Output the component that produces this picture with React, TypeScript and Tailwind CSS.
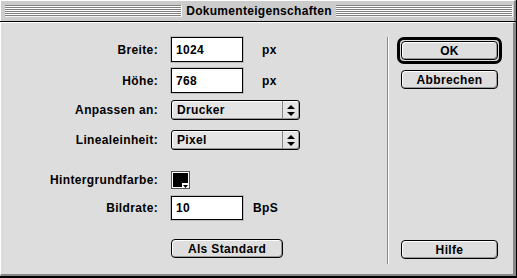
import React from 'react'

const font = "font-['Liberation_Sans',Arial,sans-serif]"

const Stripes = () => (
  <div className="flex-1 h-[12px] bg-[repeating-linear-gradient(to_bottom,#808080_0px,#808080_1px,#ffffff_1px,#ffffff_2px)] border-r border-b border-[#f4f4f4]" />
)

const Label = ({ children }: { children: React.ReactNode }) => (
  <div className="w-[157px] text-right">{children}</div>
)

const TextField = ({ value, width = 'w-[72px]', height = 'h-[25px]' }: { value: string; width?: string; height?: string }) => (
  <div className={`${width} ${height} bg-white border border-black shadow-[0_0_0_1px_#bbbbbb] flex items-center pl-[4px]`}>
    {value}
  </div>
)

const Arrows = () => (
  <svg width="8" height="11" viewBox="0 0 8 11">
    <path d="M4 0 L8 4 L0 4 Z" fill="#000" />
    <path d="M0 7 L8 7 L4 11 Z" fill="#000" />
  </svg>
)

const Select = ({ value }: { value: string }) => (
  <div className="w-[129px] h-[20px] rounded-[3px] border border-black bg-[#e4e4e4] shadow-[inset_1px_1px_0_#ffffff,inset_-1px_-1px_0_#999999] flex items-center">
    <div className="flex-1 pl-[5px]">{value}</div>
    <div className="w-[17px] h-full border-l border-[#888888] flex items-center justify-center">
      <Arrows />
    </div>
  </div>
)

const Button = ({ children, width = 'w-[97px]' }: { children: React.ReactNode; width?: string }) => (
  <div className={`${width} h-[19px] rounded-[4px] border border-black bg-[#dedede] shadow-[inset_1px_1px_0_#ffffff,inset_-1px_-1px_0_#999999] flex items-center justify-center`}>
    {children}
  </div>
)

export default function App() {
  return (
    <div className={`w-[517px] h-[278px] bg-black pr-px pb-[2px] ${font} font-bold text-[12px] tracking-[0.35px] text-black leading-none`}>
      <div className="flex flex-col h-full">
        {/* title bar */}
        <div className="h-[21px] bg-[#cccccc] border-t border-l border-white border-r-[2px] border-r-[#888888] flex items-center pl-[4px] pr-[1px] gap-[4px]">
          <Stripes />
          <div className="text-[12px] tracking-[0.3px]">Dokumenteigenschaften</div>
          <Stripes />
        </div>
        <div className="h-px bg-black" />

        {/* content */}
        <div className="flex-1 flex bg-[#dddddd] border-t border-l border-white border-r-[3px] border-b-[2px] border-r-[#888888] border-b-[#888888] pt-[14px]">
          <div className="w-[386px] flex flex-col">
            <div className="flex items-center gap-[13px]">
              <Label>Breite:</Label>
              <TextField value="1024" />
              <div className="ml-[6px]">px</div>
            </div>
            <div className="flex items-center gap-[13px] mt-[6px]">
              <Label>Höhe:</Label>
              <TextField value="768" />
              <div className="ml-[6px]">px</div>
            </div>
            <div className="flex items-center gap-[13px] mt-[7px]">
              <Label>Anpassen an:</Label>
              <Select value="Drucker" />
            </div>
            <div className="flex items-center gap-[13px] mt-[10px]">
              <Label>Linealeinheit:</Label>
              <Select value="Pixel" />
            </div>
            <div className="flex items-center gap-[13px] mt-[21px]">
              <Label>Hintergrundfarbe:</Label>
              <div className="relative w-[19px] h-[18px] border border-[#555555] bg-white p-px">
                <div className="w-full h-full bg-black" />
                <div className="absolute right-0 bottom-0 w-[7px] h-[5px] bg-white flex items-end justify-center">
                  <svg width="5" height="3" viewBox="0 0 5 3">
                    <path d="M0 0 L5 0 L2.5 3 Z" fill="#000" />
                  </svg>
                </div>
              </div>
            </div>
            <div className="flex items-center gap-[13px] mt-[7px]">
              <Label>Bildrate:</Label>
              <TextField value="10" height="h-[24px]" />
              <div className="ml-[-3px]">BpS</div>
            </div>
            <div className="flex items-center gap-[13px] mt-[19px]">
              <div className="w-[157px]" />
              <Button width="w-[112px]">Als Standard</Button>
            </div>
          </div>

          {/* divider */}
          <div className="w-[2px] h-[227px] border-l border-[#888888] bg-white" />

          <div className="flex flex-col pl-[8px]">
            <div className="w-[105px] h-[27px] rounded-[7px] border-[3px] border-black p-px">
              <Button>OK</Button>
            </div>
            <div className="ml-[4px] mt-[6px]">
              <Button>Abbrechen</Button>
            </div>
            <div className="ml-[4px] mt-[151px]">
              <Button>Hilfe</Button>
            </div>
          </div>
        </div>
      </div>
    </div>
  )
}
